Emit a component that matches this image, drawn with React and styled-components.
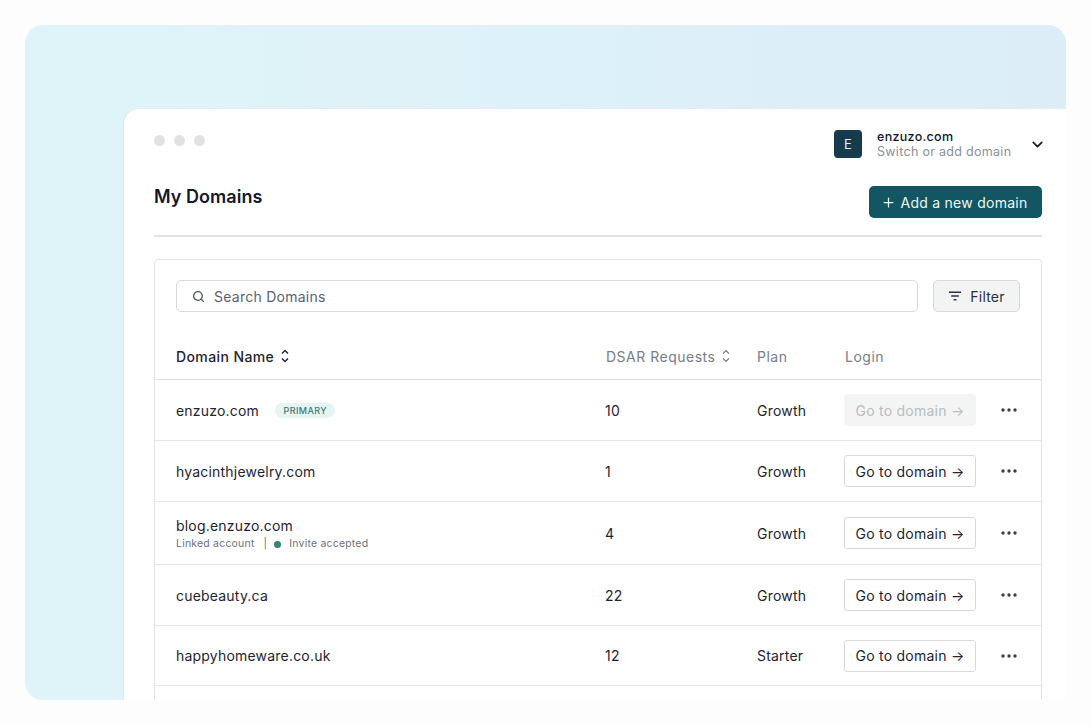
import React from "react";
import styled, { createGlobalStyle } from "styled-components";
import { Search, ChevronDown, Plus } from "lucide-react";

const GlobalStyle = createGlobalStyle`
  html, body {
    margin: 0;
    height: 100%;
    overflow: hidden;
    background: #fdfdfd;
    font-family: Inter, "Liberation Sans", sans-serif;
    color: #1f2430;
  }
  * {
    box-sizing: border-box;
  }
`;

const domains = [
  { name: "enzuzo.com", primary: true, requests: 10, plan: "Growth", disabled: true, height: 61 },
  { name: "hyacinthjewelry.com", requests: 1, plan: "Growth", height: 61 },
  { name: "blog.enzuzo.com", linked: true, requests: 4, plan: "Growth", height: 63 },
  { name: "cuebeauty.ca", requests: 22, plan: "Growth", height: 61 },
  { name: "happyhomeware.co.uk", requests: 12, plan: "Starter", height: 60 },
];

function SortIcon({ color, weight }) {
  return (
    <svg width="8" height="14" viewBox="0 0 8 14" fill="none" stroke={color} strokeWidth={weight}>
      <path d="M1 4.6l3-3 3 3M1 9.4l3 3 3-3" />
    </svg>
  );
}

export default function App() {
  return (
    <>
      <GlobalStyle />
      <Hero>
        <Window>
          <TopBar>
            <Dots>
              <Dot />
              <Dot />
              <Dot />
            </Dots>
            <Switcher>
              <Logo>E</Logo>
              <SwitcherText>
                <SwitcherName>enzuzo.com</SwitcherName>
                <SwitcherHint>Switch or add domain</SwitcherHint>
              </SwitcherText>
              <ChevronDown size={17} strokeWidth={2.4} color="#14182b" />
            </Switcher>
          </TopBar>
          <TitleRow>
            <Title>My Domains</Title>
            <AddButton>
              <Plus size={15} strokeWidth={2} />
              Add a new domain
            </AddButton>
          </TitleRow>
          <Panel>
            <Controls>
              <SearchBox>
                <Search size={13} strokeWidth={2.4} color="#4b5563" />
                Search Domains
              </SearchBox>
              <FilterButton>
                <svg width="14" height="10" viewBox="0 0 14 10" fill="none" stroke="#2b3040" strokeWidth="1.4">
                  <path d="M1 1.2h12M3.2 5h7.6M5.6 8.8h2.8" />
                </svg>
                Filter
              </FilterButton>
            </Controls>
            <HeadRow>
              <HeadCell $strong>
                Domain Name
                <SortIcon color="#1f2430" weight={1.4} />
              </HeadCell>
              <HeadCell $inset>
                DSAR Requests
                <SortIcon color="#6b7280" weight={1.1} />
              </HeadCell>
              <HeadCell>Plan</HeadCell>
              <HeadCell $inset>Login</HeadCell>
            </HeadRow>
            {domains.map((d) => (
              <Row key={d.name} $height={d.height}>
                <NameCell>
                  <NameLine>
                    {d.name}
                    {d.primary && <Badge>PRIMARY</Badge>}
                  </NameLine>
                  {d.linked && (
                    <Meta>
                      Linked account
                      <MetaBar>|</MetaBar>
                      <StatusDot />
                      Invite accepted
                    </Meta>
                  )}
                </NameCell>
                <Cell>{d.requests}</Cell>
                <Cell>{d.plan}</Cell>
                <GoButton $disabled={d.disabled}>Go to domain →</GoButton>
                <More>
                  <svg width="16" height="4" viewBox="0 0 16 4" fill="#3a3f50">
                    <circle cx="2" cy="2" r="1.7" />
                    <circle cx="8" cy="2" r="1.7" />
                    <circle cx="14" cy="2" r="1.7" />
                  </svg>
                </More>
              </Row>
            ))}
          </Panel>
        </Window>
      </Hero>
    </>
  );
}

const Hero = styled.div`
  width: 1041px;
  height: 675px;
  margin: 25px 0 0 25px;
  padding: 83px 0 0 98px;
  border-radius: 18px 18px 0 18px;
  background: linear-gradient(90deg, #dff4f8 10%, #dceff8 75%, #dcedf8 100%);
  overflow: hidden;
`;

const Window = styled.div`
  height: 592px;
  padding: 0 24px 0 30px;
  background: #fff;
  border-top: 1px solid #e6eaec;
  border-left: 1px solid #e3e6e8;
  border-radius: 16px 0 0 0;
  overflow: hidden;
`;

const TopBar = styled.div`
  display: flex;
  justify-content: space-between;
  height: 65px;
  padding-top: 21px;
`;

const Dots = styled.div`
  display: flex;
  gap: 9px;
  padding-top: 5px;
`;

const Dot = styled.span`
  width: 11px;
  height: 11px;
  border-radius: 50%;
  background: #e2e2e2;
`;

const Switcher = styled.div`
  display: flex;
  align-items: center;
  height: 28px;
  margin-right: -4px;
`;

const Logo = styled.div`
  display: flex;
  align-items: center;
  justify-content: center;
  width: 28px;
  height: 28px;
  margin-right: 15px;
  border-radius: 4px;
  background: #173a4c;
  color: #e6f2f4;
  font-size: 13px;
`;

const SwitcherText = styled.div`
  display: flex;
  flex-direction: column;
  width: 150px;
  margin-right: 2px;
`;

const SwitcherName = styled.span`
  font-size: 12.5px;
  font-weight: 500;
  line-height: 15px;
  color: #14182b;
  letter-spacing: 0.3px;
`;

const SwitcherHint = styled.span`
  font-size: 12.5px;
  line-height: 15px;
  color: #8a8f98;
  letter-spacing: 0.3px;
`;

const TitleRow = styled.div`
  display: flex;
  justify-content: space-between;
  align-items: flex-start;
  height: 63px;
  border-bottom: 2px solid #e4e4e4;
`;

const Title = styled.h1`
  margin: 12px 0 0;
  font-size: 18px;
  font-weight: 600;
  line-height: 22px;
  letter-spacing: 0.05px;
  color: #14182b;
`;

const AddButton = styled.button`
  display: flex;
  align-items: center;
  justify-content: center;
  gap: 5px;
  width: 173px;
  height: 32px;
  margin-top: 12px;
  padding: 0 3px 0 0;
  border: none;
  border-radius: 5px;
  background: #135663;
  color: #eef7f7;
  font-family: inherit;
  font-size: 14px;
  letter-spacing: 0.25px;
`;

const Panel = styled.div`
  height: 470px;
  margin-top: 22px;
  border: 1px solid #e3e3e3;
  border-radius: 4px 4px 0 0;
`;

const Controls = styled.div`
  display: flex;
  justify-content: space-between;
  padding: 20px 21px 0;
`;

const SearchBox = styled.div`
  display: flex;
  align-items: center;
  gap: 9px;
  width: 742px;
  height: 32px;
  padding-left: 15px;
  border: 1px solid #d8d8d8;
  border-radius: 5px;
  font-size: 14px;
  letter-spacing: 0.25px;
  color: #5b6270;
`;

const FilterButton = styled.button`
  display: flex;
  align-items: center;
  justify-content: center;
  gap: 8px;
  width: 87px;
  height: 32px;
  padding: 0;
  border: 1px solid #d8d8d8;
  border-radius: 5px;
  background: #f2f3f3;
  color: #2b3040;
  font-family: inherit;
  font-size: 14px;
  letter-spacing: 0.2px;
`;

const columns = "429px 152px 87px 132px 1fr";

const HeadRow = styled.div`
  display: grid;
  grid-template-columns: ${columns};
  align-items: center;
  height: 68px;
  padding: 21px 0 0 21px;
  border-bottom: 1px solid #dddddd;
`;

const HeadCell = styled.div`
  display: flex;
  align-items: center;
  gap: 7px;
  padding-left: ${(p) => (p.$inset ? 1 : 0)}px;
  font-size: 14px;
  letter-spacing: ${(p) => (p.$strong ? 0.4 : 0.5)}px;
  font-weight: ${(p) => (p.$strong ? 500 : 400)};
  color: ${(p) => (p.$strong ? "#1f2430" : "#787d87")};
`;

const Row = styled.div`
  display: grid;
  grid-template-columns: ${columns};
  align-items: center;
  height: ${(p) => p.$height}px;
  padding-left: 21px;
  border-bottom: 1px solid #e4e4e4;
`;

const Cell = styled.div`
  font-size: 14px;
  letter-spacing: 0.2px;
  color: #1f2430;
`;

const NameCell = styled(Cell)`
  display: flex;
  flex-direction: column;
`;

const NameLine = styled.div`
  display: flex;
  align-items: center;
  gap: 16px;
`;

const Badge = styled.span`
  display: flex;
  align-items: center;
  height: 15px;
  padding: 0 8.5px;
  border-radius: 8px;
  background: #e6f4f4;
  color: #3c7a70;
  font-size: 9px;
  font-weight: 500;
  letter-spacing: 0.4px;
`;

const Meta = styled.div`
  display: flex;
  align-items: center;
  margin: 3px 0 -2px;
  font-size: 10.5px;
  line-height: 14px;
  letter-spacing: 0.2px;
  color: #6b7280;
`;

const MetaBar = styled.span`
  margin: 0 7px 0 9px;
`;

const StatusDot = styled.span`
  width: 7px;
  height: 7px;
  margin-right: 8px;
  border-radius: 50%;
  background: #2f8571;
`;

const GoButton = styled.button`
  width: 132px;
  height: 32px;
  padding: 0;
  border: 1px solid ${(p) => (p.$disabled ? "#f3f4f4" : "#d9d9d9")};
  border-radius: 3px;
  background: ${(p) => (p.$disabled ? "#f3f4f4" : "#fff")};
  color: ${(p) => (p.$disabled ? "#b9bdc2" : "#1f2430")};
  font-family: inherit;
  font-size: 14px;
  letter-spacing: 0.25px;
`;

const More = styled.div`
  display: flex;
  padding-left: 25px;
`;
